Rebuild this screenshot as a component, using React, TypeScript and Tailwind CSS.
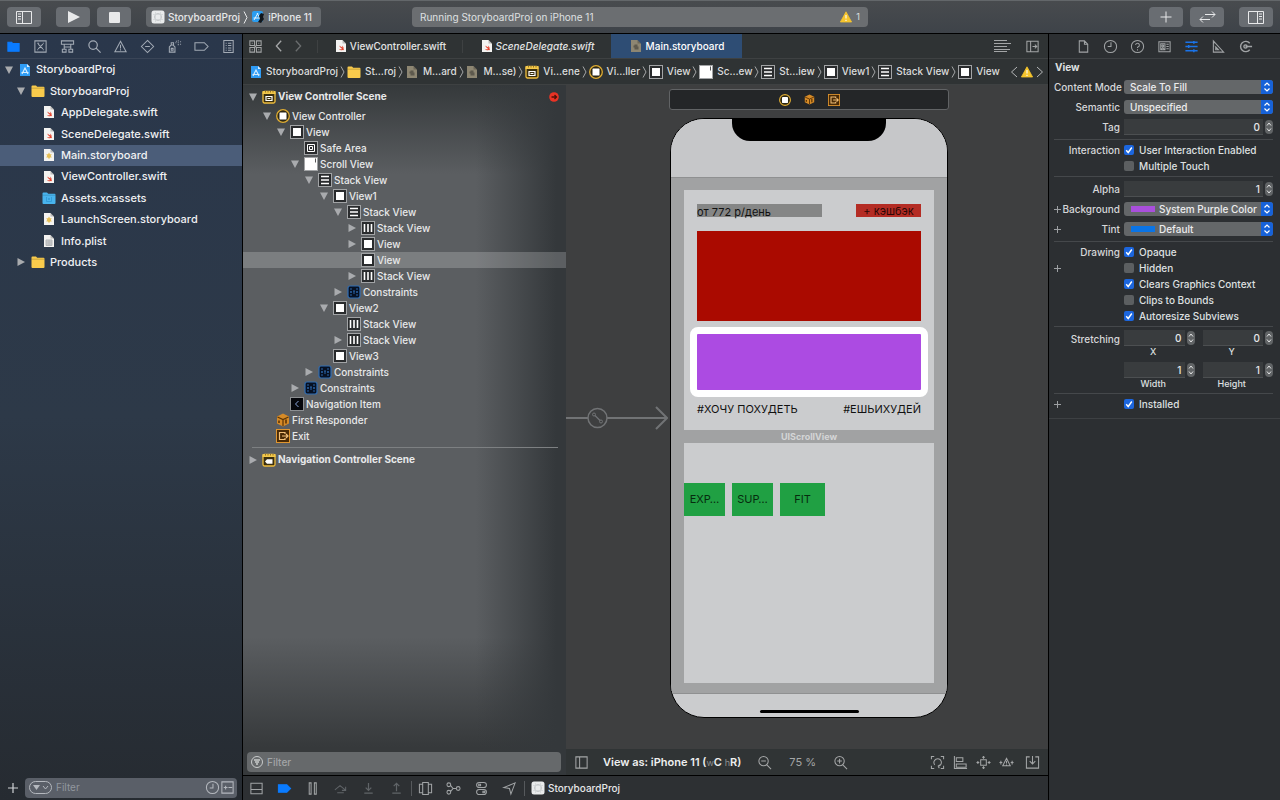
import type { ReactNode } from "react";

interface IconProps {
  size?: number;
  className?: string;
  children: ReactNode;
}

function Icon({ size = 15, className = "", children }: IconProps) {
  return (
    <svg
      width={size}
      height={size}
      viewBox="0 0 16 16"
      fill="none"
      stroke="currentColor"
      strokeWidth="1.1"
      className={`shrink-0 ${className}`}
      aria-hidden="true"
    >
      {children}
    </svg>
  );
}

/* ---------- file icons ---------- */

function ProjectIcon() {
  return (
    <svg width="12" height="14" viewBox="0 0 12 14" className="shrink-0">
      <path d="M1 1h7l3 3v9H1z" fill="#2f9cf5" />
      <path d="M8 1v3h3z" fill="#d9eeff" />
      <path d="M3 11l3-6 3 6M2.500 9.500h7" stroke="#d3ecff" strokeWidth="1.200" fill="none" />
    </svg>
  );
}

function FolderIcon() {
  return (
    <svg width="14" height="14" viewBox="0 0 14 14" className="shrink-0">
      <path d="M.5 2.500a1 1 0 0 1 1-1h3.500l1.200 1.200h6.300a1 1 0 0 1 1 1V12a1 1 0 0 1-1 1h-11a1 1 0 0 1-1-1z" fill="#f9cb4c" />
      <path d="M.5 4.200h13" stroke="#000" strokeOpacity=".18" />
    </svg>
  );
}

function AssetsIcon() {
  return (
    <svg width="14" height="14" viewBox="0 0 14 14" className="shrink-0">
      <path d="M.5 2.500a1 1 0 0 1 1-1h3.500l1.200 1.200h6.300a1 1 0 0 1 1 1V12a1 1 0 0 1-1 1h-11a1 1 0 0 1-1-1z" fill="#49b4ee" />
      <path d="M.5 4.200h13" stroke="#000" strokeOpacity=".15" />
      <path d="M4.500 6v4.500h5V6" fill="none" stroke="#2f97d3" strokeWidth=".8" />
      <circle cx="7" cy="8" r=".9" fill="#2f97d3" />
    </svg>
  );
}

type FileKind = "swift" | "storyboard" | "dim" | "plist";

function FileIcon({ kind }: { kind: FileKind }) {
  const paper = kind === "dim" ? "#8d8672" : "#f4f3f1";
  return (
    <svg width="14" height="14" viewBox="0 0 14 14" className="shrink-0">
      <path d="M2 1h6.500L12 4.500V13H2z" fill={paper} />
      <path d="M8.500 1v3.500H12z" fill="#000" fillOpacity=".22" />
      {kind === "swift" && (
        <path d="M4.800 9.800c1.500.8 2.600.6 3.300.1C6.500 8.900 5.500 7.600 4.900 6.600c1 .8 1.700 1.300 2.200 1.600-.5-.5-1-1.200-1.400-1.800 1 .9 2 1.700 2.700 2.100.2-.8-.1-1.500-.5-2.100 1.500 1 2 2.500 1.600 3.500.5.500.6 1.100.4 1.500-.4-.6-.8-.6-1.200-.4-1.200.6-3 .2-3.900-1.200z" fill="#e5432e" />
      )}
      {kind === "storyboard" && <path d="M7 4.500l1 1.700h1.800l-1 1.600 1 1.800H8L7 11.200 6 9.600H4.200l1-1.800-1-1.600H6z" fill="#e6bf58" />}
      {kind === "dim" && <path d="M5.500 5.500h3v2h1v3h-4v-2h-1v-2h1z" fill="#5d594d" />}
      {kind === "plist" && <path d="M4 6h6v5.500H4zM4 8h6M4 10h6M7 6v5.500" stroke="#b4b6b8" fill="#cfd0d1" />}
    </svg>
  );
}

/* ---------- interface builder object icons ---------- */

type ObjKind =
  | "scene" | "navscene" | "controller" | "view" | "safe" | "scroll"
  | "vstack" | "hstack" | "constraints" | "navitem" | "responder" | "exit";

function ObjIcon({ kind, size = 14 }: { kind: ObjKind; size?: number }) {
  const box = <rect x=".5" y=".5" width="13" height="13" fill="#292b2d" stroke="#a2a4a6" />;
  return (
    <svg width={size} height={size} viewBox="0 0 14 14" fill="none" className="shrink-0">
      {(kind === "scene" || kind === "navscene") && (
        <>
          <rect x="1" y="1.500" width="12" height="11.500" rx="1.500" fill="#3a2f10" stroke="#efbd3c" strokeWidth="1.300" />
          <path d="M.5 1h13v3H.5z" fill="#f3c84a" />
          <path d="M3.500 1v1.500M6 1v1.500M8.500 1v1.500M11 1v1.500" stroke="#806018" strokeWidth=".8" />
          {kind === "scene" ? (
            <path d="M4 6.500h6v4H4zM5.500 8.500h3" stroke="#fff" strokeWidth="1.200" />
          ) : (
            <path d="M3 8.500L5 6.300H10.500v4.400H5z" fill="#fff" />
          )}
        </>
      )}
      {kind === "controller" && (
        <>
          <circle cx="7" cy="7" r="6.300" fill="#2c2714" stroke="#e0ad33" strokeWidth="1.300" />
          <rect x="3.500" y="3.500" width="7" height="7" rx=".5" fill="#fff" />
        </>
      )}
      {kind === "view" && (
        <>
          {box}
          <rect x="3" y="3" width="8" height="8" fill="#fff" />
        </>
      )}
      {kind === "safe" && (
        <>
          {box}
          <path d="M3.500 3.500h7v7h-7zM5.500 5.500h3v3h-3z" stroke="#fff" />
        </>
      )}
      {kind === "scroll" && (
        <>
          <rect x=".5" y=".5" width="13" height="13" fill="#fff" stroke="#a2a4a6" />
          <path d="M11.500 1.500v4" stroke="#555" />
        </>
      )}
      {kind === "vstack" && (
        <>
          {box}
          <path d="M3 3.500h8M3 7h8M3 10.500h8" stroke="#fff" strokeWidth="1.500" />
        </>
      )}
      {kind === "hstack" && (
        <>
          {box}
          <path d="M3.500 3v8M7 3v8M10.500 3v8" stroke="#fff" strokeWidth="1.600" />
        </>
      )}
      {kind === "constraints" && (
        <>
          <rect x="1" y="1" width="12" height="12" rx="2" fill="#061022" stroke="#2f6db4" strokeWidth="1.200" />
          <path d="M4 3v8M10 3v8M3 7h8M7 5v4" stroke="#2a64a8" strokeDasharray="2 1" />
        </>
      )}
      {kind === "navitem" && (
        <>
          <rect x=".5" y=".5" width="13" height="13" fill="#05070c" stroke="#8c8f92" />
          <path d="M8.500 4L5.500 7l3 3" stroke="#8aa6dd" />
        </>
      )}
      {kind === "responder" && (
        <>
          <path d="M7 .5l6 3v7l-6 3-6-3v-7z" fill="#d58a27" />
          <path d="M1.500 4L7 6.500 12.500 4M7 6.500V13" stroke="#5c3405" strokeWidth="1.200" />
          <path d="M3 7.500v2.500M10 6.500v4" stroke="#5c3405" strokeWidth="1.600" />
        </>
      )}
      {kind === "exit" && (
        <>
          <rect x=".5" y=".5" width="13" height="13" fill="#4a2a05" stroke="#e0962f" />
          <path d="M9 5V3.500H3.500v7H9V9M6 7h6M10 5l2 2-2 2" stroke="#f2c07a" strokeWidth="1.200" />
        </>
      )}
    </svg>
  );
}

function Disclosure({ open }: { open: boolean }) {
  return (
    <svg width="8" height="8" viewBox="0 0 8 8" className="shrink-0 fill-[#a9abae]">
      {open ? <path d="M0 .5h8L4 8z" /> : <path d="M.5 0v8L8 4z" />}
    </svg>
  );
}

function Warning() {
  return (
    <svg width="12" height="12" viewBox="0 0 12 12" className="shrink-0">
      <path d="M6 .8L11.600 11H.4z" fill="#f6c52d" stroke="#f6c52d" strokeWidth=".8" strokeLinejoin="round" />
      <path d="M6 4v3.500M6 8.700v1.200" stroke="#fff" strokeWidth="1.100" />
    </svg>
  );
}

function AppGlyph() {
  return (
    <svg width="14" height="14" viewBox="0 0 14 14" fill="none" className="shrink-0">
      <rect x=".5" y=".5" width="13" height="13" rx="2.500" fill="#e9ebec" />
      <circle cx="7" cy="7" r="3.500" stroke="#c3c6c8" />
      <path d="M2 4.500h10M2 9.500h10M4.500 2v10M9.500 2v10" stroke="#cfd2d4" strokeWidth=".7" />
    </svg>
  );
}

/* ---------- top toolbar ---------- */

function ToolButton({ label, className = "", children }: { label: string; className?: string; children: ReactNode }) {
  return (
    <button
      aria-label={label}
      className={`flex h-5 w-[34px] shrink-0 items-center justify-center rounded bg-[#696d72] text-[#e8e9ea] ${className}`}
    >
      {children}
    </button>
  );
}

function Toolbar() {
  return (
    <header className="flex h-[33px] shrink-0 items-center border-t border-[#63676a] bg-linear-to-b from-[#484b4e] to-[#3e4349] px-[7px]">
      <ToolButton label="Toggle navigator">
        <svg width="16" height="13" viewBox="0 0 16 13" fill="none" stroke="currentColor">
          <path d="M.5.5h15v12H.5zM6.500.5v12M2 3h3M2 5.500h3M2 8h3" />
        </svg>
      </ToolButton>
      <ToolButton label="Run" className="ml-[15px]">
        <svg width="13" height="12" viewBox="0 0 13 12" fill="currentColor"><path d="M1 0l12 6-12 6z" /></svg>
      </ToolButton>
      <ToolButton label="Stop" className="ml-[7px]">
        <svg width="11" height="11" viewBox="0 0 11 11" fill="currentColor"><rect width="11" height="11" rx="1" /></svg>
      </ToolButton>
      <button className="ml-[15px] flex h-5 w-[175px] shrink-0 items-center rounded bg-[#64686c] px-[5px] text-[10px] font-medium text-[#e6e7e8]">
        <AppGlyph />
        <span className="ml-[3px] whitespace-nowrap">StoryboardProj</span>
        <svg width="5" height="13" viewBox="0 0 5 13" fill="none" stroke="currentColor" className="mx-[3px] shrink-0"><path d="M1 .5l3 6-3 6" /></svg>
        <svg width="14" height="14" viewBox="0 0 14 14" fill="none" className="shrink-0">
          <rect x="1" y="1" width="11" height="11" rx="2" fill="#2b9df0" />
          <path d="M3 10l4-7M6 3l4 7M2.500 8h6" stroke="#e2f3ff" />
          <path d="M8 6l2-3 3 1-1 3 1 2-3 4-3-1 2-3z" fill="#10161c" />
        </svg>
        <span className="ml-[3px] whitespace-nowrap">iPhone 11</span>
      </button>
      <div className="ml-[91px] flex h-5 w-[456px] items-center rounded bg-[#6b6e71] px-2 text-[10px] text-[#dfe0e1]">
        <span>Running StoryboardProj on iPhone 11</span>
        <span className="ml-auto flex items-center gap-1 text-[9px]"><Warning />1</span>
      </div>
      <div className="ml-auto flex items-center">
        <ToolButton label="Library">
          <svg width="12" height="12" viewBox="0 0 12 12" stroke="currentColor"><path d="M6 .5v11M.5 6h11" /></svg>
        </ToolButton>
        <ToolButton label="Code review" className="ml-[7px]">
          <svg width="17" height="12" viewBox="0 0 17 12" fill="none" stroke="currentColor">
            <path d="M6 3.500h10M13 .5l3 3-3 3M11 8.500H1M4 5.500l-3 3 3 3" />
          </svg>
        </ToolButton>
        <ToolButton label="Toggle inspectors" className="ml-[15px]">
          <svg width="16" height="13" viewBox="0 0 16 13" fill="none" stroke="currentColor">
            <path d="M.5.500h15v12H.5zM9.500.5v12M11 3h3M11 5.500h3M11 8h3" />
          </svg>
        </ToolButton>
      </div>
    </header>
  );
}

/* ---------- project navigator ---------- */

const navigatorTabs: { label: string; icon: ReactNode }[] = [
  { label: "Project", icon: <path d="M2 3.500h4l1 1.200h7v8.300H2z" fill="#0a7bff" stroke="#0a7bff" /> },
  { label: "Source control", icon: <path d="M2 2h12v12H2zM5.500 5.500l5 5M10.500 5.500l-5 5M4.500 4.500h2M4.500 11.500h1M10.500 4.500h1M10.500 11.500h1" /> },
  { label: "Symbols", icon: <path d="M1.500 2h13v3.500h-13zM4.500 5.500V11M11.500 5.500V11M2.500 11h4v3h-4zM9.500 11h4v3h-4zM4.500 8.500h7" /> },
  { label: "Find", icon: <path d="M11 6.500a4.500 4.500 0 1 1-9 0 4.500 4.500 0 0 1 9 0zM10 10l4.500 4.500" strokeWidth="1.300" /> },
  { label: "Issues", icon: <path d="M8 2.500l6 11H2zM8 6v4M8 11v1.300" /> },
  { label: "Tests", icon: <path d="M8 1.500L14.500 8 8 14.500 1.500 8zM5.500 8h5" /> },
  { label: "Debug", icon: <path d="M2.500 8.500l2-2h2l2 2v5.500h-6zM4.500 6.500V4h2.500v2.500M4.500 10h2v2h-2zM9 4h1M9.500 2.500h1M11.500 2h1M11.500 4h1M11.500 6h1M14 3h1M14 5.500h1" /> },
  { label: "Breakpoints", icon: <path d="M1 4h10l4 4-4 4H1z" /> },
  { label: "Reports", icon: <path d="M3 1.500h10v13H3zM5 4.500h1M7.500 4.500H11M5 7h1M7.500 7H11M5 9.500h1M7.500 9.500H11M5 12h1M7.500 12H11" /> },
];

interface FileRow {
  name: string;
  pad: string;
  open?: boolean;
  icon: ReactNode;
  selected?: boolean;
}

const files: FileRow[] = [
  { name: "StoryboardProj", pad: "pl-[5px]", open: true, icon: <ProjectIcon /> },
  { name: "StoryboardProj", pad: "pl-[17px]", open: true, icon: <FolderIcon /> },
  { name: "AppDelegate.swift", pad: "pl-[42px]", icon: <FileIcon kind="swift" /> },
  { name: "SceneDelegate.swift", pad: "pl-[42px]", icon: <FileIcon kind="swift" /> },
  { name: "Main.storyboard", pad: "pl-[42px]", icon: <FileIcon kind="storyboard" />, selected: true },
  { name: "ViewController.swift", pad: "pl-[42px]", icon: <FileIcon kind="swift" /> },
  { name: "Assets.xcassets", pad: "pl-[42px]", icon: <AssetsIcon /> },
  { name: "LaunchScreen.storyboard", pad: "pl-[42px]", icon: <FileIcon kind="storyboard" /> },
  { name: "Info.plist", pad: "pl-[42px]", icon: <FileIcon kind="plist" /> },
  { name: "Products", pad: "pl-[17px]", open: false, icon: <FolderIcon /> },
];

function Navigator() {
  return (
    <aside className="flex w-[242px] shrink-0 flex-col bg-linear-to-b from-[#2a374b] via-[#2d3948] to-[#262b31]">
      <nav className="grid h-[25px] shrink-0 grid-cols-9 border-b border-[#3a4557] text-[#a3abb5]">
        {navigatorTabs.map((t) => (
          <button key={t.label} aria-label={t.label} className="flex items-center justify-center">
            <Icon>{t.icon}</Icon>
          </button>
        ))}
      </nav>
      <ul className="grid h-[214px] shrink-0 grid-rows-10 text-[11px] font-medium text-[#f0f1f3]">
        {files.map((f, i) => (
          <li key={i} className={`flex items-center gap-[6px] ${f.pad} ${f.selected ? "bg-[#4b5d79]" : ""}`}>
            {f.open !== undefined && <Disclosure open={f.open} />}
            <span className="flex items-center gap-[5px] whitespace-nowrap">
              {f.icon}
              {f.name}
            </span>
          </li>
        ))}
      </ul>
      <div className="mt-auto flex h-[25px] items-center gap-[6px] pr-[5px] pl-[7px]">
        <button aria-label="Add" className="text-[#d0d3d6]">
          <svg width="12" height="12" viewBox="0 0 12 12" stroke="currentColor" strokeWidth="1.200"><path d="M6 1v10M1 6h10" /></svg>
        </button>
        <label className="flex h-5 flex-1 items-center gap-1 rounded bg-[#5a5f68] pr-[2px] pl-1 text-[#b4b8be]">
          <svg width="23" height="13" viewBox="0 0 23 13" fill="none" stroke="currentColor" className="shrink-0">
            <rect x=".5" y=".5" width="22" height="12" rx="6" />
            <path d="M4 4h7l-3.500 5z" fill="currentColor" stroke="none" />
            <path d="M14 5l2.500 3L19 5" />
          </svg>
          <input aria-label="Filter files" placeholder="Filter" className="w-0 flex-1 bg-transparent text-[10px] outline-none placeholder:text-[#92979e]" />
          <span className="flex">
            <Icon><path d="M14.500 8a6.500 6.500 0 1 1-13 0 6.500 6.500 0 0 1 13 0zM8.500 4v4.500H5" /></Icon>
            <Icon><path d="M2 2h12v12H2zM4 8h4M6 6v4M9 8h4" /></Icon>
          </span>
        </label>
      </div>
    </aside>
  );
}

/* ---------- editor tabs and jump bar ---------- */

function EditorTabs() {
  return (
    <div className="flex h-[25px] shrink-0 items-center border-b border-[#3e4142] bg-[#2f3334] text-[10px] font-medium text-[#e2e3e3]">
      <div className="flex w-[70px] shrink-0 items-center gap-[9px] pl-[5px] text-[#a4a6a7]">
        <button aria-label="Related items">
          <Icon><path d="M2 2h5v5H2zM9 2h5v5H9zM2 9h5v5H2zM9 9h5v5H9zM4 4.500h1M11 4.500h1M4 11.500h1M11 11.500h1M7 7l2 2M9 7L7 9" /></Icon>
        </button>
        <button aria-label="Back"><Icon size={14}><path d="M10.500 2L5 8l5.500 6" strokeWidth="1.500" /></Icon></button>
        <button aria-label="Forward" className="-ml-1 text-[#6b6e6f]"><Icon size={14}><path d="M5.500 2L11 8l-5.500 6" strokeWidth="1.500" /></Icon></button>
      </div>
      <button className="ml-[4px] flex h-[13px] w-[145px] items-center justify-center gap-[2px] border-l border-[#3e4142]"><FileIcon kind="swift" />ViewController.swift</button>
      <button className="flex h-[13px] w-[149px] items-center justify-center gap-[2px] border-l border-[#3e4142] italic"><FileIcon kind="swift" />SceneDelegate.swift</button>
      <button className="flex h-full w-[131px] items-center justify-center gap-[3px] bg-[#2e4d74] text-white"><FileIcon kind="dim" />Main.storyboard</button>
      <div className="ml-auto flex items-center gap-[14px] pr-2 text-[#a4a6a7]">
        <button aria-label="Adjust editor">
          <svg width="17" height="12" viewBox="0 0 17 12" stroke="currentColor"><path d="M0 .5h13M0 3.500h17M0 6.500h13M0 9.500h16M0 11.500h13" /></svg>
        </button>
        <button aria-label="Add editor"><Icon><path d="M2 2.500h12v11H2zM6 2.500v11M8 8h4.500M10.500 6l2 2-2 2" /></Icon></button>
      </div>
    </div>
  );
}

const crumbs: { name: string; icon: ReactNode }[] = [
  { name: "StoryboardProj", icon: <ProjectIcon /> },
  { name: "St…roj", icon: <FolderIcon /> },
  { name: "M…ard", icon: <FileIcon kind="dim" /> },
  { name: "M…se)", icon: <FileIcon kind="dim" /> },
  { name: "Vi…ene", icon: <ObjIcon kind="scene" /> },
  { name: "Vi…ller", icon: <ObjIcon kind="controller" /> },
  { name: "View", icon: <ObjIcon kind="view" /> },
  { name: "Sc…ew", icon: <ObjIcon kind="scroll" /> },
  { name: "St…iew", icon: <ObjIcon kind="vstack" /> },
  { name: "View1", icon: <ObjIcon kind="view" /> },
  { name: "Stack View", icon: <ObjIcon kind="vstack" /> },
  { name: "View", icon: <ObjIcon kind="view" /> },
];

function JumpBar() {
  return (
    <div className="flex h-[26px] shrink-0 items-center border-b border-[#3e4142] bg-[#2f3334] pr-1 pl-[7px] text-[10px] font-medium text-[#dcdddd]">
      <ol className="flex flex-1 items-center justify-between">
        {crumbs.map((c, i) => (
          <li key={i} className="contents">
            {i > 0 && (
              <svg width="5" height="12" viewBox="0 0 5 12" fill="none" stroke="#a4a6a7" className="shrink-0"><path d="M1 .5L4 6l-3 5.500" /></svg>
            )}
            <button className="flex items-center gap-1 whitespace-nowrap">{c.icon}{c.name}</button>
          </li>
        ))}
      </ol>
      <div className="ml-[10px] flex items-center gap-[3px] text-[#b5b7b8]">
        <button aria-label="Previous issue"><svg width="8" height="12" viewBox="0 0 8 12" fill="none" stroke="currentColor"><path d="M7 1L1.500 6 7 11" /></svg></button>
        <Warning />
        <button aria-label="Next issue"><svg width="8" height="12" viewBox="0 0 8 12" fill="none" stroke="currentColor"><path d="M1 1l5.500 5L1 11" /></svg></button>
      </div>
    </div>
  );
}

/* ---------- document outline ---------- */

interface OutlineRow {
  name: string;
  kind: ObjKind;
  pad: string;
  open?: boolean;
  selected?: boolean;
}

const outline: OutlineRow[] = [
  { name: "View Controller", kind: "controller", pad: "pl-[20px]", open: true },
  { name: "View", kind: "view", pad: "pl-[34px]", open: true },
  { name: "Safe Area", kind: "safe", pad: "pl-[48px]" },
  { name: "Scroll View", kind: "scroll", pad: "pl-[48px]", open: true },
  { name: "Stack View", kind: "vstack", pad: "pl-[62px]", open: true },
  { name: "View1", kind: "view", pad: "pl-[77px]", open: true },
  { name: "Stack View", kind: "vstack", pad: "pl-[91px]", open: true },
  { name: "Stack View", kind: "hstack", pad: "pl-[105px]", open: false },
  { name: "View", kind: "view", pad: "pl-[105px]", open: false },
  { name: "View", kind: "view", pad: "pl-[105px]", selected: true },
  { name: "Stack View", kind: "hstack", pad: "pl-[105px]", open: false },
  { name: "Constraints", kind: "constraints", pad: "pl-[91px]", open: false },
  { name: "View2", kind: "view", pad: "pl-[77px]", open: true },
  { name: "Stack View", kind: "hstack", pad: "pl-[91px]" },
  { name: "Stack View", kind: "hstack", pad: "pl-[91px]", open: false },
  { name: "View3", kind: "view", pad: "pl-[77px]" },
  { name: "Constraints", kind: "constraints", pad: "pl-[62px]", open: false },
  { name: "Constraints", kind: "constraints", pad: "pl-[48px]", open: false },
  { name: "Navigation Item", kind: "navitem", pad: "pl-[34px]" },
  { name: "First Responder", kind: "responder", pad: "pl-[20px]" },
  { name: "Exit", kind: "exit", pad: "pl-[20px]" },
];

function Outline() {
  return (
    <section className="flex w-[323px] shrink-0 flex-col bg-[#5b5e61] bg-[linear-gradient(to_right,transparent_72%,#34383b_97%),linear-gradient(to_bottom,#35393b_0%,transparent_13%,transparent_80%,#36393b_96%)] text-[10px] font-medium text-[#e8e9ea]">
      <div className="flex h-[23px] shrink-0 items-center gap-[5px] pr-[7px] pl-[6px] font-bold">
        <Disclosure open />
        <span className="flex items-center gap-[2px]">
          <ObjIcon kind="scene" />
          View Controller Scene
        </span>
        <button aria-label="Show issues" className="ml-auto">
          <svg width="10" height="10" viewBox="0 0 10 10"><circle cx="5" cy="5" r="4.800" fill="#ea3325" /><path d="M2.500 5h5M5.500 3L7.500 5l-2 2" stroke="#501008" strokeWidth="1.300" fill="none" /></svg>
        </button>
      </div>
      <ul>
        {outline.map((row, i) => (
          <li key={i} className={`flex h-4 items-center gap-[5px] ${row.pad} ${row.selected ? "bg-white/20" : ""}`}>
            {row.open === undefined ? <span className="w-2" /> : <Disclosure open={row.open} />}
            <span className="flex items-center gap-[2px]">
              <ObjIcon kind={row.kind} />
              {row.name}
            </span>
          </li>
        ))}
      </ul>
      <hr className="mt-[3px] mr-2 ml-[9px] border-[#7d8082]" />
      <div className="flex h-[23px] items-center gap-[5px] pl-[6px] font-bold">
        <Disclosure open={false} />
        <span className="flex items-center gap-[2px]">
          <ObjIcon kind="navscene" />
          Navigation Controller Scene
        </span>
      </div>
      <label className="mr-[5px] mt-auto mb-[3px] ml-1 flex h-5 items-center gap-1 rounded-sm bg-[#66696b] px-1 text-[#c9cbcc]">
        <svg width="12" height="12" viewBox="0 0 12 12" fill="none" stroke="currentColor"><circle cx="6" cy="6" r="5.500" /><path d="M3 4h6M4 6h4M5 8h2" strokeWidth="1.400" /></svg>
        <input aria-label="Filter outline" placeholder="Filter" className="w-0 flex-1 bg-transparent text-[10px] outline-none placeholder:text-[#a2a4a6]" />
      </label>
    </section>
  );
}

/* ---------- canvas ---------- */

function Phone() {
  return (
    <div className="relative mt-2 flex h-[600px] w-[278px] shrink-0 flex-col overflow-hidden rounded-[34px] border border-black bg-[#cbccce] text-[11px] text-[#111]">
      <div className="flex h-[59px] shrink-0 justify-center border-b border-[#8f9091] bg-[#c6c7c9]">
        <div className="h-[22px] w-[154px] rounded-b-[18px] bg-black" />
      </div>
      <div className="flex flex-1 flex-col bg-[#a1a2a3] px-[13px] pt-3">
        <div className="h-[240px] bg-[#cbccce] px-[13px] pt-[14px]">
          <div className="flex h-[13px] justify-between whitespace-nowrap">
            <div className="w-[125px] bg-[#858686] leading-[17px]">от 772 р/день</div>
            <div className="w-[65px] bg-[#b42c24] text-center leading-[14px] text-[#2b0806]">+ кэшбэк</div>
          </div>
          <div className="mt-[14px] h-[90px] bg-[#aa0a00]" />
          <div className="-mx-[7px] mt-[6px] h-[70px] rounded-lg border-[7px] border-white bg-[#ac4be2]" />
          <div className="mt-1 flex justify-between whitespace-nowrap"><span>#ХОЧУ ПОХУДЕТЬ</span><span>#ЕШЬИХУДЕЙ</span></div>
        </div>
        <div className="h-[13px] text-center text-[9px] leading-[13px] font-bold text-[#d4d5d6]">UIScrollView</div>
        <div className="h-[240px] bg-[#cbccce] pt-10">
          <div className="flex gap-[7px] text-center leading-[33px] text-[#062c0e]">
            <div className="h-[33px] w-[41px] bg-[#20a043]">EXP…</div>
            <div className="h-[33px] w-[41px] bg-[#20a043]">SUP…</div>
            <div className="h-[33px] w-[45px] bg-[#20a043]">FIT</div>
          </div>
        </div>
      </div>
      <div className="flex h-6 shrink-0 items-end justify-center border-t border-[#8f9091] pb-1">
        <div className="h-[3px] w-[99px] rounded-full bg-black" />
      </div>
    </div>
  );
}

function Canvas() {
  return (
    <section className="flex min-w-0 flex-1 flex-col bg-[#3e3f40]">
      <div className="relative flex flex-1 flex-col items-center overflow-hidden pt-1 pl-1">
        <div className="flex h-[21px] w-[280px] shrink-0 items-center justify-center gap-[13px] rounded-[3px] border border-[#616365] bg-[#242628]">
          <ObjIcon kind="controller" size={12} />
          <ObjIcon kind="responder" size={11} />
          <ObjIcon kind="exit" size={12} />
        </div>
        <Phone />
        <svg width="102" height="24" viewBox="0 0 102 24" fill="none" stroke="#717375" strokeWidth="2" className="absolute top-[321px] left-0">
          <path d="M0 12h22M41 12h60M90 1l11 11-11 11" />
          <circle cx="31.500" cy="12" r="9.500" strokeWidth="1.500" />
          <path d="M29 9.500l5 5" strokeWidth="1.200" />
          <circle cx="28" cy="8.500" r="1.500" strokeWidth="1" />
          <circle cx="35" cy="15.500" r="1.500" strokeWidth="1" />
        </svg>
      </div>
      <div className="flex h-[26px] shrink-0 items-center bg-[#303435] pr-2 pl-2 text-[#a4a6a7]">
        <button aria-label="Toggle outline"><Icon><path d="M2 2h12v12H2zM6 2v12" /></Icon></button>
        <button className="ml-[14px] text-[11px] font-semibold whitespace-nowrap text-[#eeefef]">
          View as: iPhone 11 (<span className="text-[9px] font-normal text-[#8f9192]">w</span>C <span className="text-[9px] font-normal text-[#8f9192]">h</span>R)
        </button>
        <button aria-label="Zoom out" className="ml-4"><Icon><path d="M12 6.500a5 5 0 1 1-10 0 5 5 0 0 1 10 0zM10.500 10.500l4.500 4.500M4.500 6.500h5" /></Icon></button>
        <span className="mx-[17px] text-[11px]">75 %</span>
        <button aria-label="Zoom in"><Icon><path d="M12 6.500a5 5 0 1 1-10 0 5 5 0 0 1 10 0zM10.500 10.500l4.500 4.500M4.500 6.500h5M7 4v5" /></Icon></button>
        <div className="ml-auto flex items-center gap-2">
          <button aria-label="Update frames"><Icon><path d="M1.500 4.500v-3h3M11.500 1.500h3v3M14.500 11.500v3h-3M4.500 14.500h-3v-3M5 10.500a4 4 0 1 1 3.500 1.500M8.500 12l2-1.500M8.500 12l1.500 2" /></Icon></button>
          <button aria-label="Align"><Icon><path d="M1.500 1v14M3.500 3h7v4h-7zM3.500 9.500H14v3.500H3.500zM1 14.500h14" /></Icon></button>
          <button aria-label="Add constraints"><Icon><path d="M5 5h6v6H5zM8 1v3M8 12v3M.5 8h3M12.500 8h3M6.500 2.500h3M6.500 13.500h3M2 6.500v3M14 6.500v3" /></Icon></button>
          <button aria-label="Resolve layout issues"><Icon><path d="M8 3.500l4 8H4zM8 6v3M8 10v.8M.5 8h3M12.500 8h3M2 6v4M14 6v4" /></Icon></button>
          <button aria-label="Embed in" className="ml-[3px]"><Icon><path d="M5 2H1.500v12h13V2H11M8 1v8.500M5 6.500l3 3 3-3" /></Icon></button>
        </div>
      </div>
    </section>
  );
}

function DebugBar() {
  return (
    <div className="flex h-[25px] shrink-0 items-center gap-[13px] border-t border-black bg-[#2d3033] pl-[6px] text-[#a1a4a6]">
      <button aria-label="Toggle debug area"><Icon><path d="M2 2.500h12v11H2zM2 9h12" /></Icon></button>
      <button aria-label="Deactivate breakpoints"><Icon><path d="M1.500 4h9L14.500 8l-4 4h-9z" fill="#0a7bff" stroke="#0a7bff" /></Icon></button>
      <button aria-label="Pause"><Icon><path d="M4.500 2h2v12h-2zM10 2h2v12h-2z" /></Icon></button>
      <button aria-label="Step over" className="text-[#606468]"><Icon><path d="M2 9.500L7.500 5l5.500 4.500M13.500 6v4H9.500M4.500 12.500h7" /></Icon></button>
      <button aria-label="Step into" className="text-[#606468]"><Icon><path d="M8 2v8M5 7l3 3 3-3M3.500 13h9" strokeWidth="1.300" /></Icon></button>
      <button aria-label="Step out" className="text-[#606468]"><Icon><path d="M8 11V2.500M5 5.500l3-3 3 3M3.500 13h9" strokeWidth="1.300" /></Icon></button>
      <button aria-label="View hierarchy" className="-ml-[6px] border-l border-[#56595c] pl-[6px]"><Icon><path d="M5 1.500h6v13H5zM5 3.500H1.500v9H5M11 3.500h3.500v9H11" /></Icon></button>
      <button aria-label="Memory graph"><Icon><path d="M5 4a2 2 0 1 1-4 0 2 2 0 0 1 4 0zM5 12a2 2 0 1 1-4 0 2 2 0 0 1 4 0zM15 8a2 2 0 1 1-4 0 2 2 0 0 1 4 0zM5 5l2.500 3L5 11M7.500 8H11" /></Icon></button>
      <button aria-label="Environment overrides"><Icon><path d="M5.500 1.500h5a2.700 2.700 0 0 1 0 5.500h-5a2.700 2.700 0 0 1 0-5.500zM5.500 9h5a2.700 2.700 0 0 1 0 5.500h-5a2.700 2.700 0 0 1 0-5.500zM5 3.500h2v1.500H5zM9.500 11h2v1.500h-2z" /></Icon></button>
      <button aria-label="Simulate location"><Icon><path d="M14 2L9.500 14 8 8 2 7z" /></Icon></button>
      <span className="-ml-[6px] flex items-center gap-[3px] border-l border-[#56595c] pl-[6px] text-[10px] font-medium text-[#e6e7e8]">
        <AppGlyph />
        StoryboardProj
      </span>
    </div>
  );
}

/* ---------- attributes inspector ---------- */

const inspectorTabs: { label: string; active?: boolean; icon: ReactNode }[] = [
  { label: "File", icon: <path d="M3.500 2h5.500l3.500 3.500v8.500h-9zM9 2v3.500h3.500" /> },
  { label: "History", icon: <path d="M14.500 8a6.500 6.500 0 1 1-13 0 6.500 6.500 0 0 1 13 0zM8.500 3.500v4.500H5" /> },
  { label: "Help", icon: <path d="M14.500 8a6.500 6.500 0 1 1-13 0 6.500 6.500 0 0 1 13 0zM6 6.500a2 2 0 1 1 2.500 2C8 8.700 8 9 8 9.700M8 11v1.200" /> },
  { label: "Identity", icon: <path d="M2 3h12v10.500H2zM4 5h4.500v6.500H4zM6.200 6.500a1 1 0 1 1 0 2 1 1 0 0 1 0-2zM4.800 11l1.400-2 1.400 2M10 5.500h2.500M10 8h2.500M10 10.500h2.500" /> },
  { label: "Attributes", active: true, icon: <path d="M1.500 3.500h13M1.500 8h13M1.500 12.500h13M10.500 2v3M5 6.500v3M10.500 11v3" strokeWidth="1.600" /> },
  { label: "Size", icon: <path d="M2.500 2L13.500 14h-11zM5 8.500l3 3H5zM2.500 5h1M2.500 7.500h1" /> },
  { label: "Connections", icon: <path d="M12.500 4.500A5.500 5.500 0 1 0 12.500 11.500M8 8h7M8 6.300a1.700 1.700 0 1 1 0 3.400 1.700 1.700 0 0 1 0-3.400z" strokeWidth="1.500" /> },
];

function Row({ label, htmlFor, plus, tall, children }: { label?: string; htmlFor?: string; plus?: boolean; tall?: boolean; children: ReactNode }) {
  return (
    <div className={`flex items-center ${tall ? "h-5" : "h-4"}`}>
      <div className="flex w-[66px] shrink-0 items-center justify-between">
        {plus ? (
          <button aria-label="Add variation" className="text-[#9da0a3]">
            <svg width="7" height="7" viewBox="0 0 7 7" stroke="currentColor"><path d="M3.500 0v7M0 3.500h7" /></svg>
          </button>
        ) : (
          <span />
        )}
        {label && <label htmlFor={htmlFor} className="whitespace-nowrap text-[#d6d7d9]">{label}</label>}
      </div>
      <div className="ml-1 flex min-w-0 flex-1 items-center">{children}</div>
    </div>
  );
}

function Select({ id, value, swatch }: { id: string; value: string; swatch?: string }) {
  return (
    <div className="relative flex flex-1">
      <select
        id={id}
        defaultValue={value}
        className={`h-[14px] w-full appearance-none rounded-[3px] bg-[#646769] pr-3 text-[10px] leading-[14px] font-medium text-[#ececed] ${swatch ? "pl-[35px]" : "pl-[6px]"}`}
      >
        <option>{value}</option>
      </select>
      {swatch && <span className={`absolute top-1 left-[7px] h-[6px] w-6 ${swatch}`} />}
      <span className="pointer-events-none absolute top-0 right-0 flex h-[14px] w-3 items-center justify-center rounded-r-[3px] bg-[#1762d8]">
        <svg width="6" height="10" viewBox="0 0 6 10" fill="none" stroke="#fff" strokeWidth="1.200"><path d="M.5 3.500L3 1l2.500 2.500M.5 6.500L3 9l2.500-2.500" /></svg>
      </span>
    </div>
  );
}

function NumberField({ id, value }: { id: string; value: string }) {
  return (
    <div className="flex min-w-0 flex-1 items-center gap-[2px]">
      <input id={id} defaultValue={value} className="h-4 w-0 flex-1 border-b border-[#4c4f51] bg-[#393c3e] pr-[3px] text-right text-[10px] font-medium text-[#e6e7e8]" />
      <button aria-label={`Step ${id}`} className="flex h-[14px] w-2 items-center justify-center rounded bg-[#616466]">
        <svg width="6" height="10" viewBox="0 0 6 10" fill="none" stroke="#e3e4e5"><path d="M1 3.500L3 1l2 2.500M1 6.500L3 9l2-2.500" /></svg>
      </button>
    </div>
  );
}

function Check({ label, checked }: { label: string; checked?: boolean }) {
  return (
    <label className="relative flex items-center gap-[5px] whitespace-nowrap">
      <input type="checkbox" defaultChecked={checked} className="peer h-[10px] w-[10px] appearance-none rounded-[2px] bg-[#5c5f61] checked:bg-[#1c66de]" />
      <svg width="10" height="10" viewBox="0 0 10 10" fill="none" stroke="#fff" strokeWidth="1.400" className="absolute left-0 hidden peer-checked:block"><path d="M2.200 5.200l2 2.300L7.800 2.500" /></svg>
      {label}
    </label>
  );
}

function Divider() {
  return <hr className="my-[2px] border-[#45484b]" />;
}

function PairField({ a, b }: { a: [string, string]; b: [string, string] }) {
  return (
    <div className="grid flex-1 grid-cols-2 gap-x-2">
      {[a, b].map(([name, value]) => (
        <div key={name} className="flex flex-col">
          <div className="flex h-[18px] items-center"><NumberField id={name} value={value} /></div>
          <label htmlFor={name} className="pr-3 text-center text-[9px] leading-[10px]">{name}</label>
        </div>
      ))}
    </div>
  );
}

function Inspector() {
  return (
    <aside className="flex w-[231px] shrink-0 flex-col bg-[#2c2f32] text-[#dfe0e1]">
      <nav className="flex h-[25px] shrink-0 justify-center border-b border-[#3d4043] text-[#a1a4a6]">
        {inspectorTabs.map((t) => (
          <button key={t.label} aria-label={t.label} className={`flex w-[27px] items-center justify-center ${t.active ? "text-[#1a73e8]" : ""}`}>
            <Icon>{t.icon}</Icon>
          </button>
        ))}
      </nav>
      <div className="border-b border-[#3d4043] pr-[7px] pb-[6px] pl-[5px] text-[10px] font-medium">
        <h2 className="ml-px h-[18px] leading-4 font-bold">View</h2>
        <Row label="Content Mode" htmlFor="mode" tall><Select id="mode" value="Scale To Fill" /></Row>
        <Row label="Semantic" htmlFor="semantic" tall><Select id="semantic" value="Unspecified" /></Row>
        <Row label="Tag" htmlFor="tag" tall><NumberField id="tag" value="0" /></Row>
        <Divider />
        <Row label="Interaction"><Check label="User Interaction Enabled" checked /></Row>
        <Row><Check label="Multiple Touch" /></Row>
        <Divider />
        <Row label="Alpha" htmlFor="alpha" tall><NumberField id="alpha" value="1" /></Row>
        <Row label="Background" htmlFor="background" plus tall><Select id="background" value="System Purple Color" swatch="bg-[#a94fdc]" /></Row>
        <Row label="Tint" htmlFor="tint" plus tall><Select id="tint" value="Default" swatch="bg-[#0a74e6]" /></Row>
        <Divider />
        <Row label="Drawing"><Check label="Opaque" checked /></Row>
        <Row plus><Check label="Hidden" /></Row>
        <Row><Check label="Clears Graphics Context" checked /></Row>
        <Row><Check label="Clips to Bounds" /></Row>
        <Row><Check label="Autoresize Subviews" checked /></Row>
        <Divider />
        <div className="flex">
          <div className="w-[66px] shrink-0 text-right leading-5 text-[#d6d7d9]">Stretching</div>
          <div className="ml-1 flex flex-1 flex-col gap-1 pb-[2px]">
            <PairField a={["X", "0"]} b={["Y", "0"]} />
            <PairField a={["Width", "1"]} b={["Height", "1"]} />
          </div>
        </div>
        <Divider />
        <Row plus><Check label="Installed" checked /></Row>
      </div>
    </aside>
  );
}

export default function App() {
  return (
    <div className="flex h-screen min-w-[1280px] flex-col overflow-hidden bg-black font-['Inter','Noto_Sans',sans-serif]">
      <Toolbar />
      <div className="mt-px flex min-h-0 flex-1 gap-px">
        <Navigator />
        <main className="flex min-w-0 flex-1 flex-col">
          <EditorTabs />
          <JumpBar />
          <div className="flex min-h-0 flex-1">
            <Outline />
            <Canvas />
          </div>
          <DebugBar />
        </main>
        <Inspector />
      </div>
    </div>
  );
}
